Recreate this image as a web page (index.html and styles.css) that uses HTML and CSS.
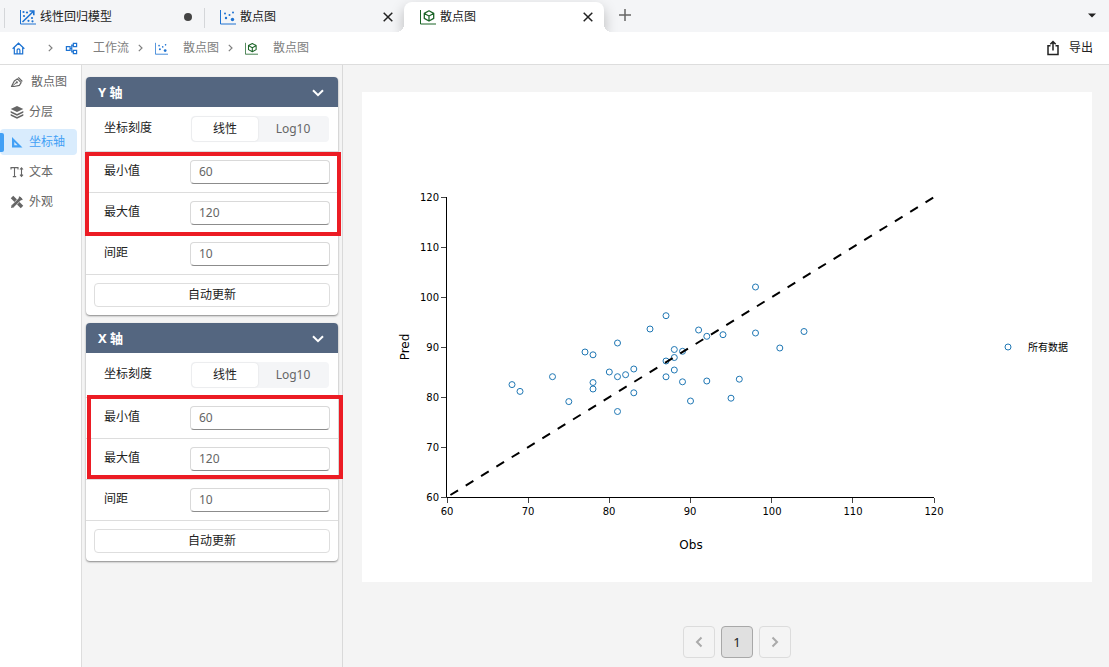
FILE: index.html
```html
<!DOCTYPE html>
<html lang="zh-CN">
<head>
<meta charset="utf-8">
<meta name="viewport" content="width=device-width, initial-scale=1">
<title>散点图</title>
<link rel="stylesheet" href="styles.css">
</head>
<body>
<svg class="sprite" aria-hidden="true">
  <symbol id="i-regress" viewBox="0 0 16 16"><path d="M.5 1v14H16" fill="none" stroke="currentColor"/><path d="M2.500 13 13 2.800M9.500 2h4.300v4.300" fill="none" stroke="currentColor" stroke-width="1.600"/><g fill="currentColor"><circle cx="3.500" cy="3" r="1.100"/><circle cx="7" cy="3.500" r="1.100"/><circle cx="4" cy="7" r="1.100"/><circle cx="12" cy="9" r="1.100"/><circle cx="8.500" cy="11.800" r="1.100"/><circle cx="12.500" cy="12.300" r="1.100"/></g></symbol>
  <symbol id="i-scatter" viewBox="0 0 16 16"><path d="M.5 1v14H16" fill="none" stroke="currentColor"/><g fill="currentColor"><circle cx="5" cy="4.500" r="1"/><circle cx="9.500" cy="6" r="1"/><circle cx="13" cy="3.500" r="1"/><circle cx="6" cy="9" r="1.200"/><circle cx="12.500" cy="10.500" r="1.700"/></g></symbol>
  <symbol id="i-cube" viewBox="0 0 16 16"><path d="M.5 1v14H16" fill="none" stroke="currentColor"/><path d="m9 1.800 4.700 2.600v5L9 12 4.300 9.400V4.400zM4.300 4.500 9 7l4.700-2.500M9 7v5" fill="none" stroke="currentColor" stroke-width="1.300" stroke-linejoin="round"/></symbol>
  <symbol id="i-home" viewBox="0 0 14 14"><path d="M.7 7.300 7 1.300l6.300 6M2.500 6v6.800h9V6M5.500 12.500V8.800a1.500 1.500 0 0 1 3 0v3.700" fill="none" stroke="currentColor" stroke-width="1.300"/></symbol>
  <symbol id="i-flow" viewBox="0 0 14 14"><path d="M1.500 5h4v4h-4zM9 1.500h3.500V5H9zM9 9h3.500v3.500H9zM5.500 7h1.800M9 3.300H7.300v7.400H9" fill="none" stroke="currentColor" stroke-width="1.300"/></symbol>
  <symbol id="i-right" viewBox="0 0 5 8"><path d="m.8.8 3.200 3.200L.8 7.200" fill="none" stroke="currentColor" stroke-width="1.200"/></symbol>
  <symbol id="i-close" viewBox="0 0 10 10"><path d="m.7.7 8.600 8.600M9.300.7.7 9.300" fill="none" stroke="currentColor" stroke-width="1.500"/></symbol>
  <symbol id="i-plus" viewBox="0 0 12 12"><path d="M6 0v12M0 6h12" fill="none" stroke="currentColor" stroke-width="1.500"/></symbol>
  <symbol id="i-caret" viewBox="0 0 8 5"><path d="M0 .5h8L4 4.500z" fill="currentColor"/></symbol>
  <symbol id="i-export" viewBox="0 0 12 16"><path d="M3.500 5.700H1v8.800h10V5.700H8.500M6 10.500V2M3.300 4.200 6 1.500l2.700 2.700" fill="none" stroke="currentColor" stroke-width="1.500"/></symbol>
  <symbol id="i-pen" viewBox="0 0 14 14"><path d="m8.300 2.300 4 4.200M7.500 3.800l3.600 3.800-1.600 2.700-5.500 1.200H1.500L4.300 6z" fill="none" stroke="currentColor" stroke-width="1.200" stroke-linejoin="round"/><path d="m2 11.300 4.200-3.500" fill="none" stroke="currentColor"/><circle cx="6.800" cy="7.400" r="1.100" fill="currentColor"/></symbol>
  <symbol id="i-layers" viewBox="0 0 14 14"><path d="m7 1 6.300 2.900L7 6.900.7 3.900zM.7 5.900 7 8.900l6.300-3v1.800l-6.300 3-6.300-3zM.7 9.100l6.300 3 6.300-3v1.700l-6.300 3-6.300-3z" fill="currentColor"/></symbol>
  <symbol id="i-ruler" viewBox="0 0 14 14"><path fill-rule="evenodd" d="M2 2v10.500h10.500zM4.300 7v3.300h3.300z" fill="currentColor"/></symbol>
  <symbol id="i-text" viewBox="0 0 14 14"><path d="M1 4.500V2.600h7v1.900M4.500 2.600v9M2.800 11.600h3.400M11.500 3v8M10 4.500l1.500-1.700L13 4.500M10 9.700l1.500 1.700L13 9.700" fill="none" stroke="currentColor" stroke-width="1.100"/></symbol>
  <symbol id="i-tools" viewBox="0 0 14 14"><path d="m2 2 10 10" fill="none" stroke="currentColor" stroke-width="3.600"/><path d="m11.300 2.500-8.600 9" fill="none" stroke="#fff" stroke-width="3.800"/><path d="m11.300 2.700-8.600 8.600" fill="none" stroke="currentColor" stroke-width="2.800"/><path d="m9 1 4 4-3 .2-1.300-1.300zM1 13l.7-3.200 2.500 2.400z" fill="currentColor"/></symbol>
</svg>

<nav class="tabs" aria-label="标签页">
  <div class="tab">
    <svg class="icon16 blue"><use href="#i-regress"/></svg>
    <span class="tab-title">线性回归模型</span>
    <span class="dot"></span>
  </div>
  <div class="tab">
    <svg class="icon16 blue"><use href="#i-scatter"/></svg>
    <span class="tab-title">散点图</span>
    <button class="icon-btn" aria-label="关闭"><svg class="icon10"><use href="#i-close"/></svg></button>
  </div>
  <div class="tab tab-active">
    <svg class="icon16 green"><use href="#i-cube"/></svg>
    <span class="tab-title">散点图</span>
    <button class="icon-btn" aria-label="关闭"><svg class="icon10"><use href="#i-close"/></svg></button>
  </div>
  <button class="icon-btn add" aria-label="新建"><svg class="icon12"><use href="#i-plus"/></svg></button>
  <button class="icon-btn more" aria-label="更多"><svg class="caret"><use href="#i-caret"/></svg></button>
</nav>

<header class="crumbs">
  <a class="home" href="#" aria-label="主页"><svg class="icon13 blue"><use href="#i-home"/></svg></a>
  <svg class="sep"><use href="#i-right"/></svg>
  <a class="crumb" href="#"><svg class="icon13 blue"><use href="#i-flow"/></svg>工作流</a>
  <svg class="sep"><use href="#i-right"/></svg>
  <a class="crumb" href="#"><svg class="icon13 blue"><use href="#i-scatter"/></svg>散点图</a>
  <svg class="sep"><use href="#i-right"/></svg>
  <a class="crumb" href="#"><svg class="icon13 green"><use href="#i-cube"/></svg>散点图</a>
  <button class="export"><svg class="export-icon"><use href="#i-export"/></svg>导出</button>
</header>

<div class="workspace">
  <nav class="side">
    <a class="side-link" href="#"><svg class="icon14"><use href="#i-pen"/></svg>散点图</a>
    <a class="side-link" href="#"><svg class="icon14"><use href="#i-layers"/></svg>分层</a>
    <a class="side-link side-active" href="#"><svg class="icon14"><use href="#i-ruler"/></svg>坐标轴</a>
    <a class="side-link" href="#"><svg class="icon14"><use href="#i-text"/></svg>文本</a>
    <a class="side-link" href="#"><svg class="icon14"><use href="#i-tools"/></svg>外观</a>
  </nav>

  <aside class="panel">
    <section class="card">
      <button class="card-head">Y 轴<svg class="chev" viewBox="0 0 12 8"><path d="m1 1.200 5 5 5-5"/></svg></button>
      <div class="row row-scale">
        <span class="label">坐标刻度</span>
        <div class="segment"><button class="seg seg-on">线性</button><button class="seg">Log10</button></div>
      </div>
      <div class="range range-y">
        <div class="row"><label class="label" for="y-min">最小值</label><input class="field" id="y-min" value="60"></div>
        <div class="row"><label class="label" for="y-max">最大值</label><input class="field" id="y-max" value="120"></div>
      </div>
      <div class="row"><label class="label" for="y-step">间距</label><input class="field" id="y-step" value="10"></div>
      <div class="row row-last"><button class="update">自动更新</button></div>
    </section>

    <section class="card">
      <button class="card-head">X 轴<svg class="chev" viewBox="0 0 12 8"><path d="m1 1.200 5 5 5-5"/></svg></button>
      <div class="row row-scale">
        <span class="label">坐标刻度</span>
        <div class="segment"><button class="seg seg-on">线性</button><button class="seg">Log10</button></div>
      </div>
      <div class="range range-x">
        <div class="row"><label class="label" for="x-min">最小值</label><input class="field" id="x-min" value="60"></div>
        <div class="row"><label class="label" for="x-max">最大值</label><input class="field" id="x-max" value="120"></div>
      </div>
      <div class="row"><label class="label" for="x-step">间距</label><input class="field" id="x-step" value="10"></div>
      <div class="row row-last"><button class="update">自动更新</button></div>
    </section>
  </aside>

  <main class="stage">
    <svg class="chart" viewBox="0 0 730 490" role="img" aria-label="Pred / Obs">
      <path class="axis" d="M84.500 105v300.500H572"/>
      <path class="tick" d="M79 105.500h5M79 155.500h5M79 205.500h5M79 255.500h5M79 305.500h5M79 355.500h5M79 405.500h5M85.500 406v5M166.500 406v5M247.500 406v5M328.500 406v5M409.500 406v5M490.500 406v5M572.500 406v5"/>
      <g class="tick-y">
        <text x="77" y="109">120</text><text x="77" y="159">110</text><text x="77" y="209">100</text><text x="77" y="259">90</text><text x="77" y="309">80</text><text x="77" y="359">70</text><text x="77" y="409">60</text>
      </g>
      <g class="tick-x">
        <text x="85" y="423">60</text><text x="166" y="423">70</text><text x="247" y="423">80</text><text x="328" y="423">90</text><text x="410" y="423">100</text><text x="491" y="423">110</text><text x="572" y="423">120</text>
      </g>
      <text class="axis-name" x="329" y="457">Obs</text>
      <text class="axis-name" transform="translate(47 255) rotate(-90)">Pred</text>
      <g class="points">
        <circle cx="304" cy="223.700" r="3"/><circle cx="288" cy="237" r="3"/><circle cx="255.500" cy="251" r="3"/><circle cx="223" cy="260" r="3"/><circle cx="231" cy="262.800" r="3"/><circle cx="312.300" cy="257.500" r="3"/><circle cx="320.500" cy="259.300" r="3"/>
        <circle cx="393.500" cy="195" r="3"/><circle cx="336.600" cy="238" r="3"/><circle cx="344.800" cy="244.300" r="3"/><circle cx="361" cy="242.700" r="3"/><circle cx="393.500" cy="241" r="3"/><circle cx="442" cy="239.500" r="3"/><circle cx="417.800" cy="256" r="3"/><circle cx="312.300" cy="265.500" r="3"/>
        <circle cx="150" cy="292.600" r="3"/><circle cx="158" cy="299.400" r="3"/><circle cx="190.500" cy="284.700" r="3"/><circle cx="206.800" cy="309.600" r="3"/><circle cx="231" cy="290.500" r="3"/><circle cx="231" cy="297" r="3"/><circle cx="247.300" cy="280" r="3"/><circle cx="255.500" cy="284.700" r="3"/>
        <circle cx="263.600" cy="282.700" r="3"/><circle cx="271.800" cy="277" r="3"/><circle cx="271.800" cy="300.800" r="3"/><circle cx="255.500" cy="319.500" r="3"/><circle cx="304" cy="269" r="3"/><circle cx="304" cy="284.800" r="3"/><circle cx="312.300" cy="278" r="3"/><circle cx="320.500" cy="289.800" r="3"/>
        <circle cx="344.800" cy="289" r="3"/><circle cx="377.300" cy="287.200" r="3"/><circle cx="328.500" cy="309" r="3"/><circle cx="369" cy="306.200" r="3"/><circle cx="646" cy="255" r="3"/>
      </g>
      <path class="fit" d="M88.400 403 571.500 105.500"/>
      <text class="legend" x="666" y="259">所有数据</text>
    </svg>
    <nav class="pager" aria-label="分页">
      <button class="page" aria-label="上一页"><svg class="page-icon" viewBox="0 0 8 12"><path d="M6.500 1.500 2 6l4.500 4.500"/></svg></button>
      <button class="page page-on">1</button>
      <button class="page" aria-label="下一页"><svg class="page-icon" viewBox="0 0 8 12"><path d="M1.500 1.500 6 6l-4.500 4.500"/></svg></button>
    </nav>
  </main>
</div>
</body>
</html>
```

FILE: styles.css
```css
* { box-sizing: border-box; }

body {
  margin: 0;
  min-height: 100vh;
  display: flex;
  flex-direction: column;
  background: #f4f4f4;
  color: #222;
  font: 12px/18px "Noto Sans", "Noto Sans CJK SC", sans-serif;
}

button, input { font: inherit; color: inherit; margin: 0; }
button { border: 0; padding: 0; background: none; cursor: pointer; }
a { color: inherit; text-decoration: none; }
svg { flex: none; }

.sprite { position: absolute; width: 0; height: 0; }
.icon10 { width: 10px; height: 10px; }
.icon12 { width: 12px; height: 12px; }
.icon13 { width: 13px; height: 13px; }
.icon14 { width: 14px; height: 14px; }
.icon16 { width: 16px; height: 16px; }
.blue { color: #1e73d2; }
.green { color: #1b6427; }

/* Tabs */
.tabs {
  display: flex;
  align-items: flex-end;
  height: 32px;
  padding-left: 4px;
  background: #f4f5f7;
  overflow: hidden;
}
.tab {
  position: relative;
  display: flex;
  align-items: center;
  gap: 4px;
  width: 200px;
  height: 30px;
  padding: 0 11px 0 16px;
}
.tab:not(.tab-active)::before {
  content: "";
  position: absolute;
  left: 0;
  top: 6px;
  width: 1px;
  height: 20px;
  background: #d4d6d9;
}
.tab-title { flex: 1; }
.tab-active {
  background: #fff;
  border-radius: 8px 8px 0 0;
  box-shadow: 0 6px 14px rgba(0, 0, 0, .25);
}
.tab-active::before, .tab-active::after {
  content: "";
  position: absolute;
  bottom: 0;
  width: 8px;
  height: 8px;
}
.tab-active::before { right: 100%; background: radial-gradient(circle at 0 0, transparent 8px, #fff 8px); }
.tab-active::after { left: 100%; background: radial-gradient(circle at 100% 0, transparent 8px, #fff 8px); }
.dot { width: 8px; height: 8px; margin-right: 1px; border-radius: 50%; background: #444; }
.icon-btn { display: flex; align-items: center; justify-content: center; }
.add { height: 32px; margin-left: 15px; padding-bottom: 2px; color: #666; }
.more { height: 32px; margin: 0 13px 0 auto; padding-bottom: 2px; }
.caret { width: 8px; height: 5px; }

/* Breadcrumbs */
.crumbs {
  display: flex;
  align-items: center;
  height: 33px;
  padding: 0 16px 0 12px;
  background: #fff;
  border-bottom: 1px solid #ddd;
  color: #808080;
}
.home { display: flex; margin-right: 14px; }
.crumb { display: flex; align-items: center; gap: 15px; }
.sep { width: 5px; height: 8px; margin: 0 12px 0 9px; }
.export { display: flex; align-items: center; gap: 10px; margin-left: auto; color: #222; }
.export-icon { width: 12px; height: 16px; }

/* Workspace */
.workspace { flex: 1; display: flex; }
.side {
  flex: none;
  display: flex;
  flex-direction: column;
  gap: 4px;
  width: 82px;
  padding: 4px 4px 0 0;
  background: #fff;
  border-right: 1px solid #ddd;
  color: #666;
}
.side-link {
  position: relative;
  display: flex;
  align-items: center;
  gap: 5px;
  height: 26px;
  padding-left: 10px;
  border-radius: 4px;
}
.side-link:first-child { gap: 7px; }
.side-active { background: #d9ecfd; color: #42a0f5; }
.side-active::before {
  content: "";
  position: absolute;
  left: 0;
  top: 4px;
  width: 4px;
  height: 19px;
  border-radius: 0 2px 2px 0;
  background: #42a0f5;
}

.panel {
  flex: none;
  display: flex;
  flex-direction: column;
  gap: 8px;
  width: 261px;
  padding: 12px 4px;
  border-right: 1px solid #d9d9d9;
}
.card {
  background: #fff;
  border-radius: 4px;
  box-shadow: 0 1px 2px rgba(0, 0, 0, .45);
}
.card-head {
  display: flex;
  align-items: center;
  justify-content: space-between;
  width: 100%;
  height: 30px;
  padding: 0 14px 0 12px;
  border-radius: 4px 4px 0 0;
  background: #546680;
  color: #fff;
  font-size: 13px;
  font-weight: 700;
}
.chev { width: 12px; height: 8px; margin-top: 2px; fill: none; stroke: #fff; stroke-width: 2; }
.row {
  display: flex;
  align-items: center;
  height: 41px;
  padding: 0 8px 0 18px;
  border-bottom: 1px solid #ddd;
}
.row-scale { height: 45px; padding-right: 9px; }
.row-last { height: 40px; padding-left: 8px; border-bottom: 0; }
.label { flex: 1; padding-bottom: 2px; }
.segment {
  display: grid;
  grid-template-columns: 66px 1fr;
  width: 138px;
  height: 26px;
  padding: 1px;
  border-radius: 4px;
  background: #f4f5f7;
}
.seg { border-radius: 4px; color: #666; }
.seg-on { background: #fff; color: #222; box-shadow: 0 0 2px rgba(0, 0, 0, .12); }
.field {
  width: 140px;
  height: 24px;
  padding: 0 8px 1px;
  border: 1px solid #d9d9d9;
  border-bottom-color: #8c8c8c;
  border-radius: 4px;
  background: #fff;
  color: #666;
}
.update {
  flex: 1;
  height: 24px;
  border: 1px solid #dedede;
  border-radius: 4px;
}

/* Highlight frames around the min/max rows */
.range { position: relative; }
.range::after {
  content: "";
  position: absolute;
  border: 4px solid #ec1c24;
  pointer-events: none;
}
.range-y::after { inset: 0 -3px -2px -1px; }
.range-x::after { inset: -3px -5px 1px 1px; }

/* Chart */
.stage { flex: 1; min-width: 0; padding: 27px 17px 8px 19px; }
.chart {
  display: block;
  width: 100%;
  height: auto;
  background: #fff;
  font: 10px "DejaVu Sans", "Noto Sans CJK SC", sans-serif;
}
.axis { fill: none; stroke: #000; }
.tick { fill: none; stroke: #444; }
.tick-y { text-anchor: end; }
.tick-x, .axis-name { text-anchor: middle; }
.axis-name { font-size: 12px; }
.points { fill: none; stroke: #1f77b4; }
.fit { fill: none; stroke: #000; stroke-width: 2; stroke-dasharray: 9 9; }

.pager {
  display: flex;
  justify-content: center;
  gap: 6px;
  margin-top: 44px;
  padding-left: 20px;
}
.page {
  display: flex;
  align-items: center;
  justify-content: center;
  width: 32px;
  height: 32px;
  border: 1px solid #dcdcdc;
  border-radius: 4px;
  font-size: 13px;
}
.page-on { border-color: #a8a8a8; background: #e0e0e0; }
.page-icon { width: 8px; height: 12px; fill: none; stroke: #aaa; stroke-width: 2; }
```
